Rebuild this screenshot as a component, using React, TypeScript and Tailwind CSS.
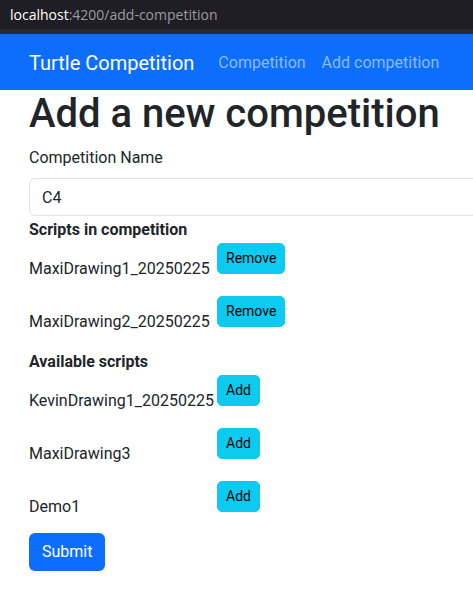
import React from 'react';

const inCompetition = ['MaxiDrawing1_20250225', 'MaxiDrawing2_20250225'];
const available = ['KevinDrawing1_20250225', 'MaxiDrawing3', 'Demo1'];

const ScriptRow: React.FC<{ name: string; action: string }> = ({ name, action }) => (
  <div className="flex items-start">
    <span className="w-[188px] shrink-0 mt-[14px] mb-[15px] text-base leading-6 text-[#212529] whitespace-nowrap">
      {name}
    </span>
    <button className="h-[31px] px-2 rounded-[5px] bg-[#0dcaf0] border border-[#0dcaf0] text-[14px] leading-[21px] text-black">
      {action}
    </button>
  </div>
);

const App: React.FC = () => {
  return (
    <div className="w-[473px] h-[592px] overflow-hidden bg-white font-['Roboto',sans-serif]">
      {/* browser address bar */}
      <div className="h-[29px] bg-[#1f1e24] pl-[10px] flex items-center font-['Open_Sans','Liberation_Sans',sans-serif] text-[14px]">
        <span className="text-white">localhost</span>
        <span className="text-[#9b9ba0]">:4200/add-competition</span>
      </div>
      <div className="h-[5px] bg-[#2b2a33]" />

      {/* navbar */}
      <nav className="h-[56px] bg-[#0d6efd] flex items-center pl-[29px] pt-px whitespace-nowrap">
        <span className="text-[20px] leading-[30px] text-white mr-4">Turtle Competition</span>
        <span className="px-2 text-base text-[#8bbbfe]">Competition</span>
        <span className="px-2 text-base text-[#8bbbfe]">Add competition</span>
      </nav>

      <main className="pl-[29px]">
        <h1 className="text-[40px] leading-[48px] font-medium text-[#212529] mb-2">Add a new competition</h1>
        <label className="block text-base leading-6 text-[#212529] mb-2">Competition Name</label>
        <input
          defaultValue="C4"
          className="block w-[500px] h-[38px] px-3 border border-[#dee2e6] rounded-[6px] text-base text-[#212529] outline-none"
        />

        <h6 className="mt-[2px] text-base leading-6 font-bold text-[#212529] mb-px">Scripts in competition</h6>
        {inCompetition.map((s) => (
          <ScriptRow key={s} name={s} action="Remove" />
        ))}

        <h6 className="pt-px text-base leading-6 font-bold text-[#212529] mb-px">Available scripts</h6>
        {available.map((s) => (
          <ScriptRow key={s} name={s} action="Add" />
        ))}

        <button className="-mt-px h-[38px] px-[13px] rounded-[6px] bg-[#0d6efd] text-white text-base">Submit</button>
      </main>
    </div>
  );
};

export default App;
